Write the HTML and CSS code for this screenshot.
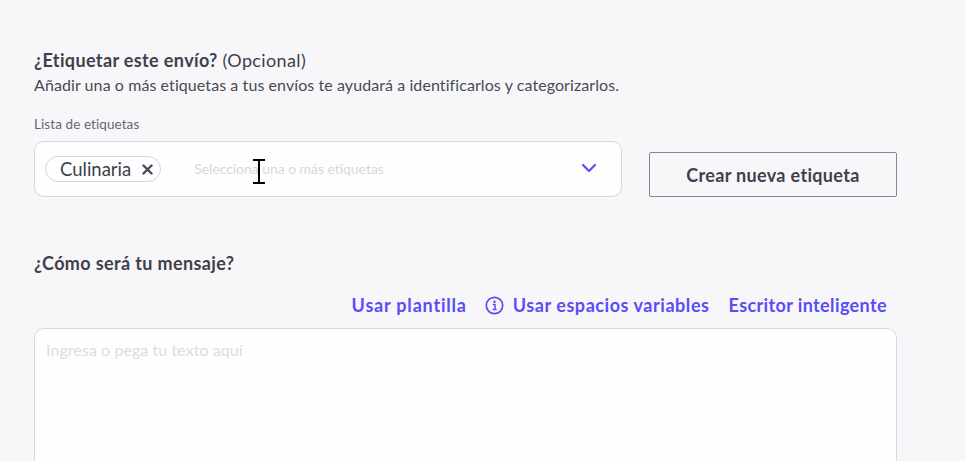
FILE: index.html
```html
<!DOCTYPE html>
<html lang="es">
<head>
<meta charset="utf-8">
<title>Etiquetas y mensaje</title>
<link rel="stylesheet" href="styles.css">
</head>
<body>
<main class="page">
  <section class="tags">
    <h2 class="title">¿Etiquetar este envío? <span class="optional">(Opcional)</span></h2>
    <p class="desc">Añadir una o más etiquetas a tus envíos te ayudará a identificarlos y categorizarlos.</p>
    <div class="tag-row">
      <div class="field">
        <div class="field-label">Lista de etiquetas</div>
        <div class="select">
          <span class="chip">Culinaria
            <svg class="chip-x" width="11" height="11" viewBox="0 0 11 11"><path d="M1.5 1.5l8 8M9.5 1.5l-8 8" stroke="#4a4a5c" stroke-width="2.4" stroke-linecap="round" fill="none"/></svg>
          </span>
          <span class="placeholder">Selecciona una o más etiquetas</span>
          <svg class="chevron" width="16" height="10" viewBox="0 0 16 10"><path d="M2 2l6 6 6-6" stroke="#5b4cf5" stroke-width="2.2" stroke-linecap="round" stroke-linejoin="round" fill="none"/></svg>
          <svg class="ibeam" width="14" height="25" viewBox="0 0 14 25"><path d="M1 1h12M1 24h12M7 1v23" stroke="#000" stroke-width="2" fill="none"/></svg>
        </div>
      </div>
      <button class="create" type="button">Crear nueva etiqueta</button>
    </div>
  </section>
  <section class="message">
    <h2 class="title">¿Cómo será tu mensaje?</h2>
    <div class="actions">
      <a class="action action-wide">Usar plantilla</a>
      <a class="action with-icon">
        <svg width="19" height="19" viewBox="0 0 19 19"><circle cx="9.5" cy="9.5" r="8.2" stroke="#5b4cf5" stroke-width="1.7" fill="none"/><circle cx="9.5" cy="5.8" r="1.2" fill="#5b4cf5"/><path d="M7.6 8.6h2.4v4.6M7.6 13.4h4" stroke="#5b4cf5" stroke-width="1.5" fill="none"/></svg>
        Usar espacios variables</a>
      <a class="action">Escritor inteligente</a>
    </div>
    <div class="textbox">Ingresa o pega tu texto aquí</div>
  </section>
</main>
</body>
</html>
```
FILE: styles.css
```css
* { box-sizing: border-box; }
html, body { margin: 0; height: 100%; overflow: hidden; background: #f7f7fa; }
body { font-family: "Lato", "Noto Sans", sans-serif; color: #3a3a4a; }
.page { width: 897px; padding: 50px 0 0 34px; }
.title { margin: 0; font-size: 18px; line-height: 20px; font-weight: 700; letter-spacing: .37px; color: #3f3f4c; }
.optional { font-weight: 400; }
.desc { margin: 4px 0 0; font-size: 16px; line-height: 21px; letter-spacing: .08px; color: #4a4a55; }
.tag-row { display: flex; align-items: flex-end; gap: 27px; margin-top: 20px; }
.field { width: 588px; }
.field-label { font-size: 13.5px; line-height: 18px; letter-spacing: .08px; color: #666673; margin-bottom: 8px; }
.select { position: relative; display: flex; align-items: center; height: 56px; padding: 0 24px 0 10px; background: #fefefe; border: 1px solid #d9d8e2; border-radius: 10px; }
.chip { display: flex; align-items: center; gap: 11px; height: 26px; padding: 0 7px 0 14px; font-size: 18.5px; color: #3f3f4c; background: #fefefe; border: 1px solid #d4d4dc; border-radius: 13px; }
.placeholder { margin-left: 33px; margin-top: -1px; font-size: 14px; letter-spacing: -.05px; color: #d8d8de; }
.chevron { margin-left: auto; margin-top: -2px; }
.ibeam { position: absolute; left: 217px; top: 17px; }
.create { width: 248px; height: 45px; padding: 0; font: 700 18px "Lato", sans-serif; letter-spacing: .33px; color: #3f3f4c; background: #f7f7fa; border: 1px solid #85858f; border-radius: 2px; }
.message { margin-top: 56px; }
.actions { display: flex; justify-content: flex-end; align-items: center; gap: 19px; padding-right: 10px; margin-top: 20px; }
.action { font-size: 18px; line-height: 24px; font-weight: 700; letter-spacing: .38px; color: #5b4cf5; }
.action-wide { letter-spacing: .8px; margin-right: -1px; }
.with-icon { display: flex; align-items: center; gap: 9px; letter-spacing: .55px; }
.textbox { height: 200px; margin-top: 11px; padding: 11px 11px; font-size: 16px; letter-spacing: .07px; color: #dcdce2; background: #fefefe; border: 1px solid #d9d8e2; border-radius: 10px; }
```
